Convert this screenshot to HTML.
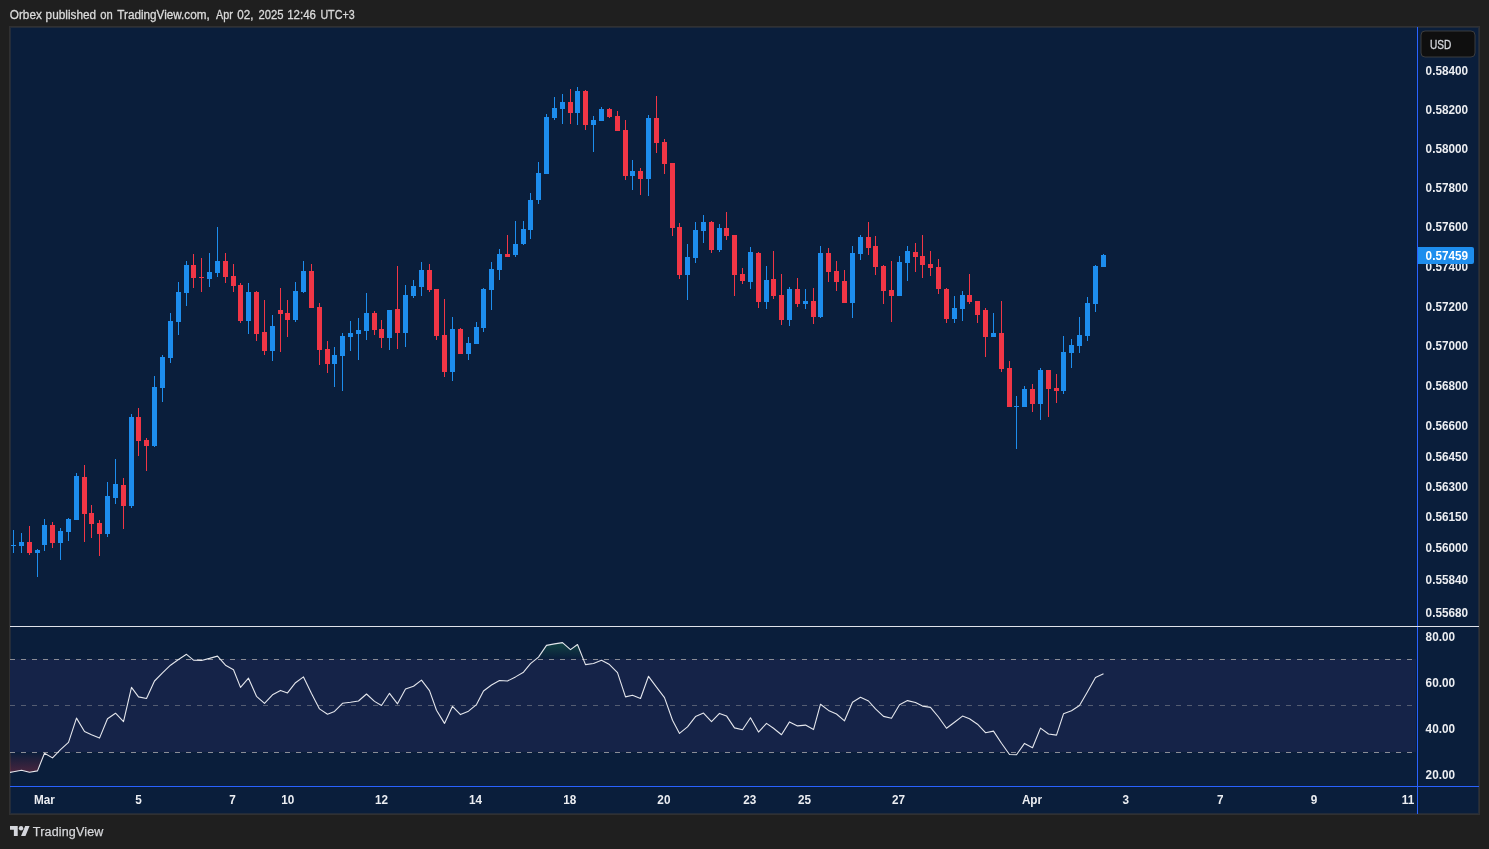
<!DOCTYPE html>
<html lang="en"><head><meta charset="utf-8"><title>Orbex published on TradingView.com</title>
<style>
html,body{margin:0;padding:0;background:#1f1f1f;}
body{width:1489px;height:849px;overflow:hidden;font-family:"Liberation Sans", sans-serif;}
svg{display:block;will-change:transform}
text{font-family:"Liberation Sans", sans-serif;}
.ax{font-size:12.5px;font-weight:700;fill:#eceef2;}
.tl{font-size:12.5px;font-weight:700;fill:#eceef2;text-anchor:middle;}
</style></head><body>
<svg width="1489" height="849" viewBox="0 0 1489 849">
<rect x="0" y="0" width="1489" height="849" fill="#1f1f1f"/>
<g id="hdr" font-size="12" fill="#dadada" stroke="#dadada" stroke-width="0.3"><text x="9.8" y="19" textLength="32.0" lengthAdjust="spacingAndGlyphs">Orbex</text><text x="45.6" y="19" textLength="50.5" lengthAdjust="spacingAndGlyphs">published</text><text x="100.3" y="19" textLength="12.5" lengthAdjust="spacingAndGlyphs">on</text><text x="117.3" y="19" textLength="92.4" lengthAdjust="spacingAndGlyphs">TradingView.com,</text><text x="216.0" y="19" textLength="16.8" lengthAdjust="spacingAndGlyphs">Apr</text><text x="237.2" y="19" textLength="16.2" lengthAdjust="spacingAndGlyphs">02,</text><text x="258.5" y="19" textLength="25.0" lengthAdjust="spacingAndGlyphs">2025</text><text x="287.2" y="19" textLength="28.7" lengthAdjust="spacingAndGlyphs">12:46</text><text x="320.4" y="19" textLength="34.2" lengthAdjust="spacingAndGlyphs">UTC+3</text></g>
<rect x="9" y="26" width="1471" height="789" fill="#303031"/>
<rect x="10" y="27" width="1469" height="787" fill="#232c3a"/>
<rect x="11" y="28" width="1467" height="785" fill="#0a1e3b"/>

<g shape-rendering="crispEdges">
<rect x="10" y="659" width="1406" height="93" fill="#152348"/>
</g>
<defs>
<linearGradient id="gOB" gradientUnits="userSpaceOnUse" x1="0" y1="627" x2="0" y2="659"><stop offset="0" stop-color="#26a05a" stop-opacity="0.55"/><stop offset="1" stop-color="#26a05a" stop-opacity="0.0"/></linearGradient>
<linearGradient id="gOS" gradientUnits="userSpaceOnUse" x1="0" y1="752" x2="0" y2="786"><stop offset="0" stop-color="#f23645" stop-opacity="0.0"/><stop offset="1" stop-color="#f23645" stop-opacity="0.45"/></linearGradient>
<clipPath id="cpR"><rect x="10" y="627" width="1407" height="159"/></clipPath>
</defs>
<polygon fill="url(#gOB)" points="178.5,659.5 186.5,654.3 192.8,659.5"/>
<polygon fill="url(#gOB)" points="205.3,659.5 209.5,658.4 217.5,656.1 220.5,659.5"/>
<polygon fill="url(#gOB)" points="535.6,659.5 538.5,657.1 546.5,645.4 554.5,643.9 562.5,642.6 570.5,649.6 577.5,644.5 583.5,659.5"/>
<polygon fill="url(#gOS)" points="10.0,752.5 10.0,772.4 13.5,771.8 21.5,770.3 29.5,772.2 37.5,770.9 44.5,753.2 52.5,757.9 57.7,752.5"/>
<polygon fill="url(#gOS)" points="1008.1,752.5 1009.5,754.5 1016.5,754.7 1018.1,752.5"/>
<line x1="10" y1="659.5" x2="1413" y2="659.5" stroke="#8a8d96" stroke-width="1" stroke-dasharray="5 6" shape-rendering="crispEdges"/>
<line x1="10" y1="705.5" x2="1413" y2="705.5" stroke="#555d72" stroke-width="1" stroke-dasharray="5 6" shape-rendering="crispEdges"/>
<line x1="10" y1="752.5" x2="1413" y2="752.5" stroke="#8a8d96" stroke-width="1" stroke-dasharray="5 6" shape-rendering="crispEdges"/>
<polyline clip-path="url(#cpR)" fill="none" stroke="#e4e6ec" stroke-width="1.1" stroke-linejoin="round" points="10.0,772.4 13.5,771.8 21.5,770.3 29.5,772.2 37.5,770.9 44.5,753.2 52.5,757.9 60.5,749.6 68.5,742.3 76.5,718.1 84.5,731.5 91.5,734.7 99.5,738.1 107.5,718.7 115.5,713.2 123.5,721.7 131.5,687.4 138.5,696.9 146.5,698.5 154.5,681.0 162.5,672.9 170.5,665.2 178.5,659.5 186.5,654.3 193.5,660.1 201.5,660.5 209.5,658.4 217.5,656.1 225.5,665.2 233.5,669.7 240.5,687.4 248.5,678.2 256.5,696.3 264.5,703.3 272.5,694.8 280.5,690.4 287.5,692.9 295.5,682.7 303.5,676.9 311.5,693.5 319.5,708.9 327.5,714.2 334.5,711.4 342.5,703.3 350.5,702.3 358.5,701.0 366.5,694.0 374.5,701.4 381.5,705.5 389.5,693.3 397.5,703.8 405.5,689.1 413.5,686.3 421.5,680.1 429.5,690.6 436.5,710.2 444.5,723.4 452.5,706.3 460.5,714.6 468.5,711.2 476.5,704.6 483.5,691.0 491.5,685.0 499.5,680.5 507.5,681.0 515.5,676.9 523.5,672.2 530.5,663.7 538.5,657.1 546.5,645.4 554.5,643.9 562.5,642.6 570.5,649.6 577.5,644.5 585.5,664.6 593.5,663.5 601.5,660.3 609.5,664.6 617.5,672.7 625.5,696.9 632.5,695.2 640.5,698.5 648.5,676.3 656.5,687.2 664.5,697.6 672.5,720.2 679.5,733.4 687.5,726.8 695.5,716.6 703.5,713.1 711.5,721.7 719.5,713.4 726.5,715.9 734.5,727.9 742.5,729.8 750.5,717.8 758.5,732.1 766.5,723.4 773.5,728.3 781.5,734.7 789.5,721.9 797.5,725.9 805.5,725.1 813.5,729.6 820.5,704.2 828.5,710.4 836.5,714.0 844.5,720.8 852.5,702.3 860.5,697.2 868.5,701.0 875.5,708.9 883.5,716.4 891.5,718.3 899.5,704.8 907.5,700.6 915.5,702.5 922.5,706.1 930.5,707.4 938.5,717.0 946.5,728.3 954.5,722.3 962.5,716.1 969.5,718.7 977.5,724.2 985.5,732.7 993.5,731.1 1001.5,743.2 1009.5,754.5 1016.5,754.7 1024.5,743.4 1032.5,747.7 1040.5,728.1 1048.5,734.0 1056.5,735.1 1063.5,713.8 1071.5,710.8 1079.5,705.5 1087.5,691.7 1095.5,677.6 1103.5,673.8"/>
<g shape-rendering="crispEdges">
<path fill="#1d8ded" d="M13 530h1v23h-1zM11 545h5v1h-5zM21 533h1v20h-1zM19 542h5v4h-5zM37 549h1v28h-1zM35 550h5v3h-5zM44 519h1v32h-1zM42 525h5v20h-5zM60 528h1v32h-1zM58 531h5v12h-5zM68 518h1v23h-1zM66 519h5v13h-5zM76 473h1v47h-1zM74 476h5v44h-5zM107 482h1v55h-1zM105 496h5v38h-5zM115 459h1v45h-1zM113 484h5v14h-5zM131 414h1v94h-1zM129 417h5v89h-5zM154 376h1v71h-1zM152 387h5v59h-5zM162 355h1v47h-1zM160 357h5v31h-5zM170 313h1v50h-1zM168 321h5v37h-5zM178 282h1v53h-1zM176 292h5v30h-5zM186 261h1v45h-1zM184 265h5v28h-5zM209 253h1v34h-1zM207 272h5v7h-5zM217 227h1v50h-1zM215 261h5v12h-5zM248 283h1v51h-1zM246 292h5v29h-5zM272 315h1v46h-1zM270 326h5v25h-5zM295 282h1v40h-1zM293 291h5v29h-5zM303 261h1v32h-1zM301 271h5v21h-5zM334 347h1v40h-1zM332 355h5v9h-5zM342 333h1v58h-1zM340 336h5v20h-5zM350 321h1v30h-1zM348 333h5v4h-5zM358 318h1v42h-1zM356 330h5v4h-5zM366 293h1v47h-1zM364 313h5v18h-5zM389 310h1v40h-1zM387 310h5v28h-5zM405 285h1v62h-1zM403 295h5v38h-5zM413 280h1v18h-1zM411 286h5v10h-5zM421 262h1v34h-1zM419 270h5v17h-5zM452 317h1v64h-1zM450 329h5v43h-5zM468 337h1v23h-1zM466 343h5v11h-5zM476 322h1v22h-1zM474 327h5v17h-5zM483 288h1v44h-1zM481 289h5v39h-5zM491 262h1v48h-1zM489 269h5v21h-5zM499 249h1v31h-1zM497 254h5v16h-5zM515 221h1v36h-1zM513 244h5v11h-5zM523 221h1v24h-1zM521 229h5v15h-5zM530 193h1v46h-1zM528 200h5v30h-5zM538 162h1v42h-1zM536 173h5v27h-5zM546 114h1v60h-1zM544 117h5v57h-5zM554 97h1v23h-1zM552 108h5v10h-5zM562 94h1v30h-1zM560 102h5v7h-5zM577 87h1v38h-1zM575 91h5v22h-5zM593 116h1v36h-1zM591 120h5v5h-5zM601 107h1v14h-1zM599 109h5v12h-5zM632 160h1v30h-1zM630 171h5v5h-5zM648 115h1v81h-1zM646 118h5v61h-5zM687 244h1v56h-1zM685 257h5v18h-5zM695 222h1v41h-1zM693 230h5v28h-5zM703 215h1v28h-1zM701 222h5v9h-5zM719 224h1v28h-1zM717 228h5v22h-5zM750 247h1v42h-1zM748 252h5v30h-5zM766 266h1v43h-1zM764 280h5v22h-5zM789 287h1v39h-1zM787 289h5v31h-5zM805 289h1v20h-1zM803 301h5v3h-5zM820 246h1v72h-1zM818 253h5v64h-5zM852 246h1v72h-1zM850 253h5v50h-5zM860 235h1v25h-1zM858 237h5v17h-5zM899 256h1v40h-1zM897 262h5v34h-5zM907 246h1v35h-1zM905 251h5v12h-5zM954 296h1v27h-1zM952 308h5v11h-5zM962 291h1v30h-1zM960 295h5v14h-5zM993 313h1v24h-1zM991 333h5v4h-5zM1016 396h1v53h-1zM1014 406h5v1h-5zM1024 386h1v21h-1zM1022 389h5v18h-5zM1040 368h1v52h-1zM1038 370h5v34h-5zM1063 336h1v58h-1zM1061 352h5v39h-5zM1071 339h1v29h-1zM1069 345h5v8h-5zM1079 317h1v36h-1zM1077 335h5v11h-5zM1087 297h1v44h-1zM1085 303h5v33h-5zM1095 265h1v47h-1zM1093 266h5v38h-5zM1103 254h1v13h-1zM1101 255h5v12h-5z"/>
<path fill="#f03646" d="M29 526h1v29h-1zM27 542h5v11h-5zM52 522h1v26h-1zM50 525h5v18h-5zM84 465h1v77h-1zM82 477h5v37h-5zM91 505h1v33h-1zM89 513h5v11h-5zM99 520h1v36h-1zM97 523h5v11h-5zM123 478h1v51h-1zM121 485h5v21h-5zM138 408h1v48h-1zM136 417h5v24h-5zM146 438h1v33h-1zM144 440h5v6h-5zM193 254h1v34h-1zM191 265h5v13h-5zM201 258h1v34h-1zM199 277h5v1h-5zM225 253h1v30h-1zM223 261h5v16h-5zM233 264h1v28h-1zM231 276h5v10h-5zM240 283h1v40h-1zM238 285h5v36h-5zM256 291h1v50h-1zM254 292h5v42h-5zM264 300h1v55h-1zM262 332h5v19h-5zM280 288h1v64h-1zM278 310h5v4h-5zM287 300h1v37h-1zM285 313h5v7h-5zM311 264h1v44h-1zM309 271h5v37h-5zM319 303h1v62h-1zM317 307h5v43h-5zM327 341h1v32h-1zM325 349h5v15h-5zM374 311h1v24h-1zM372 313h5v17h-5zM381 320h1v28h-1zM379 329h5v9h-5zM397 266h1v83h-1zM395 309h5v24h-5zM429 264h1v28h-1zM427 270h5v20h-5zM436 289h1v51h-1zM434 289h5v47h-5zM444 299h1v78h-1zM442 335h5v37h-5zM460 328h1v26h-1zM458 329h5v25h-5zM507 235h1v22h-1zM505 254h5v3h-5zM570 89h1v35h-1zM568 102h5v11h-5zM585 90h1v40h-1zM583 91h5v34h-5zM609 108h1v10h-1zM607 109h5v8h-5zM617 111h1v20h-1zM615 116h5v15h-5zM625 120h1v60h-1zM623 130h5v46h-5zM640 168h1v27h-1zM638 171h5v8h-5zM656 96h1v57h-1zM654 118h5v25h-5zM664 139h1v35h-1zM662 142h5v22h-5zM672 163h1v73h-1zM670 163h5v65h-5zM679 223h1v56h-1zM677 227h5v48h-5zM711 221h1v32h-1zM709 222h5v28h-5zM726 212h1v28h-1zM724 228h5v8h-5zM734 235h1v61h-1zM732 235h5v40h-5zM742 268h1v16h-1zM740 274h5v7h-5zM758 252h1v56h-1zM756 253h5v49h-5zM773 251h1v48h-1zM771 279h5v17h-5zM781 274h1v51h-1zM779 295h5v25h-5zM797 278h1v29h-1zM795 289h5v15h-5zM813 288h1v36h-1zM811 301h5v16h-5zM828 248h1v34h-1zM826 253h5v19h-5zM836 261h1v30h-1zM834 271h5v11h-5zM844 270h1v33h-1zM842 281h5v22h-5zM868 222h1v33h-1zM866 237h5v11h-5zM875 236h1v39h-1zM873 246h5v21h-5zM883 265h1v39h-1zM881 266h5v25h-5zM891 261h1v61h-1zM889 290h5v6h-5zM915 243h1v29h-1zM913 252h5v5h-5zM922 235h1v43h-1zM920 256h5v9h-5zM930 251h1v25h-1zM928 264h5v4h-5zM938 259h1v35h-1zM936 267h5v22h-5zM946 288h1v35h-1zM944 289h5v30h-5zM969 274h1v30h-1zM967 295h5v7h-5zM977 301h1v22h-1zM975 301h5v14h-5zM985 308h1v49h-1zM983 310h5v27h-5zM1001 301h1v71h-1zM999 333h5v36h-5zM1009 361h1v46h-1zM1007 368h5v39h-5zM1032 384h1v28h-1zM1030 389h5v15h-5zM1048 370h1v47h-1zM1046 370h5v19h-5zM1056 374h1v29h-1zM1054 388h5v3h-5z"/>
<rect x="1417" y="27" width="1" height="787" fill="#2962ff"/>
<rect x="10" y="786" width="1469" height="1" fill="#2962ff"/>
<rect x="10" y="626" width="1469" height="1" fill="#dfe2ea"/>
</g>
<rect x="1421" y="31" width="54" height="26" rx="4" ry="4" fill="#0f0f0f" stroke="#3b3c3e" stroke-width="1"/>
<text x="1430" y="49" font-size="12" fill="#d6d8dd" stroke="#d6d8dd" stroke-width="0.3" textLength="21.3" lengthAdjust="spacingAndGlyphs">USD</text>
<text class="ax" transform="translate(1425.6 75) scale(0.94 1)">0.58400</text>
<text class="ax" transform="translate(1425.6 114) scale(0.94 1)">0.58200</text>
<text class="ax" transform="translate(1425.6 153) scale(0.94 1)">0.58000</text>
<text class="ax" transform="translate(1425.6 192) scale(0.94 1)">0.57800</text>
<text class="ax" transform="translate(1425.6 231) scale(0.94 1)">0.57600</text>
<text class="ax" transform="translate(1425.6 271) scale(0.94 1)">0.57400</text>
<text class="ax" transform="translate(1425.6 311) scale(0.94 1)">0.57200</text>
<text class="ax" transform="translate(1425.6 350) scale(0.94 1)">0.57000</text>
<text class="ax" transform="translate(1425.6 390) scale(0.94 1)">0.56800</text>
<text class="ax" transform="translate(1425.6 430) scale(0.94 1)">0.56600</text>
<text class="ax" transform="translate(1425.6 461) scale(0.94 1)">0.56450</text>
<text class="ax" transform="translate(1425.6 491) scale(0.94 1)">0.56300</text>
<text class="ax" transform="translate(1425.6 521) scale(0.94 1)">0.56150</text>
<text class="ax" transform="translate(1425.6 552) scale(0.94 1)">0.56000</text>
<text class="ax" transform="translate(1425.6 584) scale(0.94 1)">0.55840</text>
<text class="ax" transform="translate(1425.6 617) scale(0.94 1)">0.55680</text>
<path d="M1418 247h54a2 2 0 0 1 2 2v13a2 2 0 0 1-2 2h-54z" fill="#1d8ded"/>
<text class="ax" transform="translate(1425.6 260) scale(0.94 1)" style="fill:#fff">0.57459</text>
<text class="ax" transform="translate(1425.6 641) scale(0.94 1)">80.00</text>
<text class="ax" transform="translate(1425.6 687) scale(0.94 1)">60.00</text>
<text class="ax" transform="translate(1425.6 733) scale(0.94 1)">40.00</text>
<text class="ax" transform="translate(1425.6 779) scale(0.94 1)">20.00</text>
<text class="tl" transform="translate(44.4 804) scale(0.94 1)">Mar</text>
<text class="tl" transform="translate(138.6 804) scale(0.94 1)">5</text>
<text class="tl" transform="translate(232.4 804) scale(0.94 1)">7</text>
<text class="tl" transform="translate(287.7 804) scale(0.94 1)">10</text>
<text class="tl" transform="translate(381.5 804) scale(0.94 1)">12</text>
<text class="tl" transform="translate(475.5 804) scale(0.94 1)">14</text>
<text class="tl" transform="translate(569.8 804) scale(0.94 1)">18</text>
<text class="tl" transform="translate(663.9 804) scale(0.94 1)">20</text>
<text class="tl" transform="translate(749.8 804) scale(0.94 1)">23</text>
<text class="tl" transform="translate(804.6 804) scale(0.94 1)">25</text>
<text class="tl" transform="translate(898.6 804) scale(0.94 1)">27</text>
<text class="tl" transform="translate(1032 804) scale(0.94 1)">Apr</text>
<text class="tl" transform="translate(1125.7 804) scale(0.94 1)">3</text>
<text class="tl" transform="translate(1220.2 804) scale(0.94 1)">7</text>
<text class="tl" transform="translate(1314 804) scale(0.94 1)">9</text>
<text class="tl" transform="translate(1408 804) scale(0.94 1)">11</text>
<g transform="translate(10 823.79) scale(0.552)" fill="#d4d6dc"><path d="M14 22H7V11H0V4h14v18zM28 22h-8l7.5-18h8L28 22z"/><circle cx="20" cy="8" r="4"/></g>
<text x="32.8" y="836" font-size="12.5" fill="#d6d7da" stroke="#d6d7da" stroke-width="0.25" textLength="70.6" lengthAdjust="spacing" id="tvt">TradingView</text>
</svg></body></html>
